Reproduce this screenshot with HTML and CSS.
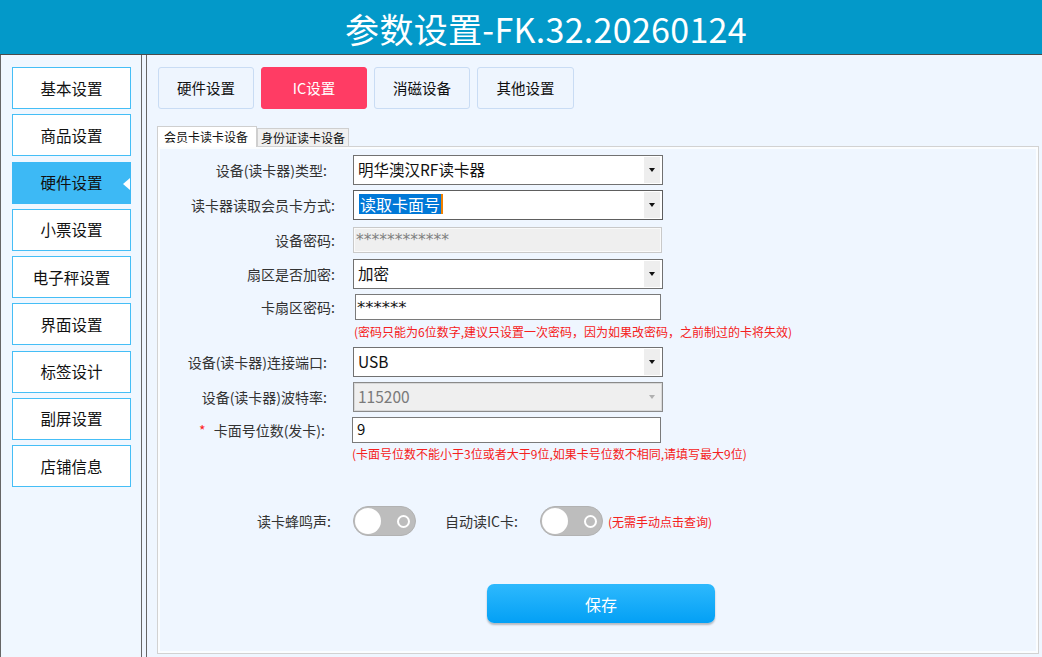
FILE: index.html
```html
<!DOCTYPE html>
<html lang="zh-CN">
<head>
<meta charset="utf-8">
<title>参数设置</title>
<link rel="stylesheet" href="styles.css">
</head>
<body>
<div class="app">
  <header class="header"><h1 class="title">参数设置-FK.32.20260124</h1></header>
  <div class="main">
    <nav class="sidebar">
      <div class="nav-item">基本设置</div>
      <div class="nav-item">商品设置</div>
      <div class="nav-item active">硬件设置</div>
      <div class="nav-item">小票设置</div>
      <div class="nav-item">电子秤设置</div>
      <div class="nav-item">界面设置</div>
      <div class="nav-item">标签设计</div>
      <div class="nav-item">副屏设置</div>
      <div class="nav-item">店铺信息</div>
    </nav>
    <div class="splitter"></div>
    <section class="content">
      <div class="tabs">
        <div class="tab">硬件设置</div>
        <div class="tab tab-ic active">IC设置</div>
        <div class="tab">消磁设备</div>
        <div class="tab tab-other">其他设置</div>
      </div>
      <div class="subtabs">
        <div class="subtab selected">会员卡读卡设备</div>
        <div class="subtab">身份证读卡设备</div>
      </div>
      <div class="panel">
        <div class="form">
          <div class="row row-sel">
            <label class="lbl lbl-paren">设备(读卡器)类型:</label>
            <div class="select"><span class="sel-text">明华澳汉RF读卡器</span><span class="sel-btn"><i class="caret"></i></span></div>
          </div>
          <div class="row row-sel gap5">
            <label class="lbl">读卡器读取会员卡方式:</label>
            <div class="select focus"><span class="sel-text"><span class="hl">读取卡面号</span></span><span class="sel-btn"><i class="caret"></i></span></div>
          </div>
          <div class="row row-inp gap7">
            <label class="lbl">设备密码:</label>
            <div class="input readonly">************</div>
          </div>
          <div class="row row-sel gap6">
            <label class="lbl">扇区是否加密:</label>
            <div class="select"><span class="sel-text">加密</span><span class="sel-btn"><i class="caret"></i></span></div>
          </div>
          <div class="row row-inp gap5">
            <label class="lbl">卡扇区密码:</label>
            <div class="input pwd">******</div>
          </div>
          <div class="note note1">(密码只能为6位数字,建议只设置一次密码，因为如果改密码，之前制过的卡将失效)</div>
          <div class="row row-sel gap5">
            <label class="lbl lbl-paren">设备(读卡器)连接端口:</label>
            <div class="select"><span class="sel-text">USB</span><span class="sel-btn"><i class="caret"></i></span></div>
          </div>
          <div class="row row-sel gap5">
            <label class="lbl lbl-paren">设备(读卡器)波特率:</label>
            <div class="select disabled"><span class="sel-text">115200</span><span class="sel-btn"><i class="caret"></i></span></div>
          </div>
          <div class="row row-inp gap5">
            <label class="lbl lbl-paren2"><span class="req">*</span>卡面号位数(发卡):</label>
            <div class="input num">9</div>
          </div>
          <div class="note note2">(卡面号位数不能小于3位或者大于9位,如果卡号位数不相同,请填写最大9位)</div>
          <div class="toggle-row">
            <span class="t-lbl">读卡蜂鸣声:</span>
            <span class="switch"><span class="knob"></span><span class="ring"></span></span>
            <span class="t-lbl t-lbl2">自动读IC卡:</span>
            <span class="switch"><span class="knob"></span><span class="ring"></span></span>
            <span class="t-note">(无需手动点击查询)</span>
          </div>
          <div class="save-row"><button class="save" type="button">保存</button></div>
        </div>
      </div>
    </section>
  </div>
</div>
</body>
</html>
```

FILE: styles.css
```css
* { box-sizing: border-box; }
html, body { margin: 0; padding: 0; }
body {
  width: 1042px;
  height: 657px;
  overflow: hidden;
  background: #eff6ff;
  font-family: "Noto Sans CJK SC", "Noto Sans", sans-serif;
  color: #222;
}
.app { width: 1042px; height: 657px; display: flex; flex-direction: column; }

.header {
  height: 55px;
  background: #0399c9;
  border-bottom: 1px solid #4b4b4b;
  display: flex;
  align-items: center;
  justify-content: center;
  padding-top: 4px;
  padding-left: 50px;
}
.title {
  margin: 0;
  font-weight: 400;
  font-size: 34px;
  line-height: 40px;
  color: #fff;
  letter-spacing: 0.3px;
}

.main { flex: 1; display: flex; min-height: 0; }

.sidebar {
  width: 142px;
  border-left: 1px solid #666;
  border-right: 1px solid #666;
  background: #f0f7ff;
  padding: 12px 0 0 11px;
  display: flex;
  flex-direction: column;
  gap: 5.25px;
}
.nav-item {
  position: relative;
  width: 119px;
  height: 42px;
  border: 1px solid #45bef6;
  background: #fff;
  display: flex;
  align-items: center;
  justify-content: center;
  font-size: 15.5px;
  line-height: 20px;
  padding-bottom: 1px;
  color: #111;
}
.nav-item.active {
  background: #3db9f5;
  border-color: #3db9f5;
}
.nav-item.active::after {
  content: "";
  position: absolute;
  right: 0;
  top: 15px;
  border-top: 6px solid transparent;
  border-bottom: 6px solid transparent;
  border-right: 7px solid #fff;
}

.splitter {
  width: 5px;
  border-right: 1px solid #666;
  background: #eef5fe;
}

.content {
  flex: 1;
  padding: 12px 0 0 10px;
  display: flex;
  flex-direction: column;
}

.tabs { display: flex; gap: 7px; margin-left: 1px; }
.tab {
  width: 96px;
  height: 42px;
  border: 1px solid #c9dcf4;
  border-radius: 3px;
  background: #eef5fe;
  display: flex;
  align-items: center;
  justify-content: center;
  font-size: 14.5px;
  line-height: 20px;
  padding-bottom: 1px;
  color: #111;
}
.tab-ic { width: 106px; }
.tab-other { width: 97px; }
.tab.active { background: #ff3c64; border-color: #ff3c64; color: #fff; }

.subtabs {
  margin-top: 17px;
  height: 20px;
  display: flex;
  align-items: flex-end;
  position: relative;
  z-index: 1;
}
.subtab {
  height: 18px;
  padding: 0 3px;
  width: 92px;
  border: 1px solid #cfcfcf;
  border-bottom: none;
  background: #f0f0f0;
  font-size: 12px;
  line-height: 17px;
  color: #111;
  white-space: nowrap;
  overflow: hidden;
}
.subtab.selected {
  width: 100px;
  height: 21px;
  margin-bottom: -1px;
  padding: 0 6px;
  background: #fff;
  line-height: 19px;
}

.panel {
  width: 882px;
  height: 508px;
  border: 1px solid #d2d2d2;
  box-shadow: inset 0 0 0 2px #fbfdff;
  background: #eff6ff;
}

.form { padding-top: 8px; display: flex; flex-direction: column; }
.row { display: flex; align-items: center; }
.row-sel { height: 30px; }
.row-inp { height: 26px; }
.gap5 { margin-top: 5px; }
.gap6 { margin-top: 6px; }
.gap7 { margin-top: 7px; }

.lbl {
  width: 177px;
  margin-right: 18px;
  text-align: right;
  font-size: 14px;
  line-height: 20px;
  color: #333;
  white-space: nowrap;
}
.lbl-paren { padding-right: 8px; }
.lbl-paren2 { padding-right: 10px; }
.req { color: #ff2020; margin-right: 8px; }

.select {
  width: 310px;
  height: 30px;
  border: 1px solid #717171;
  background: #fff;
  display: flex;
  align-items: center;
  padding: 1px 1px 1px 4px;
}
.select.focus { border-color: #5e5e5e; }
.sel-text {
  flex: 1;
  font-size: 15.5px;
  line-height: 20px;
  margin-top: -3px;
  color: #111;
  white-space: nowrap;
}
.hl {
  display: inline-block;
  background: #0078d7;
  color: #fff;
  padding: 0 1px;
  border-right: 2px solid #f08000;
  font-size: 16px;
  line-height: 20px;
  margin-left: 1px;
}
.sel-btn {
  width: 16px;
  height: 26px;
  margin-right: 1px;
  background: #eeeeee;
  display: flex;
  align-items: center;
  justify-content: center;
}
.caret {
  display: block;
  width: 0;
  height: 0;
  border-left: 3px solid transparent;
  border-right: 3px solid transparent;
  border-top: 4px solid #111;
}
.select.disabled {
  background: #efefef;
  border-color: #8a8a8a;
  box-shadow: inset 0 0 0 1px #d8d8d8;
}
.select.disabled .sel-text { color: #7a7a7a; }
.select.disabled .sel-btn { background: transparent; }
.select.disabled .caret { border-top-color: #b0b0b0; }

.input {
  height: 26px;
  border: 1px solid #7a7a7a;
  background: #fff;
  padding: 0 4px;
  font-size: 15px;
  line-height: 22px;
  color: #111;
}
.input.readonly {
  width: 309px;
  background: #efefef;
  border-color: #c9c9c9;
  box-shadow: inset 0 0 0 1px #fafafa;
  color: #808080;
  font-family: "DejaVu Sans", sans-serif;
  font-size: 15.5px;
  line-height: 24px;
  padding-left: 2px;
}
.input.pwd {
  width: 306px;
  margin-left: 2px;
  font-family: "DejaVu Sans", sans-serif;
  font-size: 16.5px;
  line-height: 26px;
  padding-left: 1px;
}
.input.num { width: 309px; margin-left: -1px; }

.note {
  height: 20px;
  line-height: 20px;
  font-size: 12px;
  color: #f52020;
  white-space: nowrap;
}
.note1 { margin-top: 2px; padding-left: 196px; }
.note2 { margin-top: 1px; padding-left: 194px; }

.toggle-row {
  margin-top: 42px;
  height: 30px;
  display: flex;
  align-items: center;
  padding-left: 99px;
}
.t-lbl { font-size: 14px; color: #333; width: 73px; margin-right: 23px; white-space: nowrap; }
.t-lbl2 { width: 72px; margin-left: 29px; margin-right: 23px; }
.switch {
  position: relative;
  width: 63px;
  height: 30px;
  border-radius: 15px;
  background: #bdbdbd;
  border: 1px solid #b2b2b2;
  display: flex;
  align-items: center;
  justify-content: space-between;
  padding: 0 5px 0 1px;
}
.knob { width: 26px; height: 26px; border-radius: 50%; background: #fff; }
.ring {
  width: 13px;
  height: 13px;
  border-radius: 50%;
  border: 2px solid #fff;
}
.t-note { margin-left: 5px; font-size: 12px; color: #f52020; white-space: nowrap; }

.save-row { margin-top: 48px; padding-left: 329px; }
.save {
  width: 228px;
  height: 39px;
  border: none;
  border-radius: 7px;
  background: linear-gradient(#2eb9fd, #03a0f5);
  box-shadow: 0 2px 2px rgba(0, 0, 0, 0.25);
  color: #fff;
  font-family: "Noto Sans CJK SC", "Noto Sans", sans-serif;
  font-size: 16px;
  padding: 0;
}
```
